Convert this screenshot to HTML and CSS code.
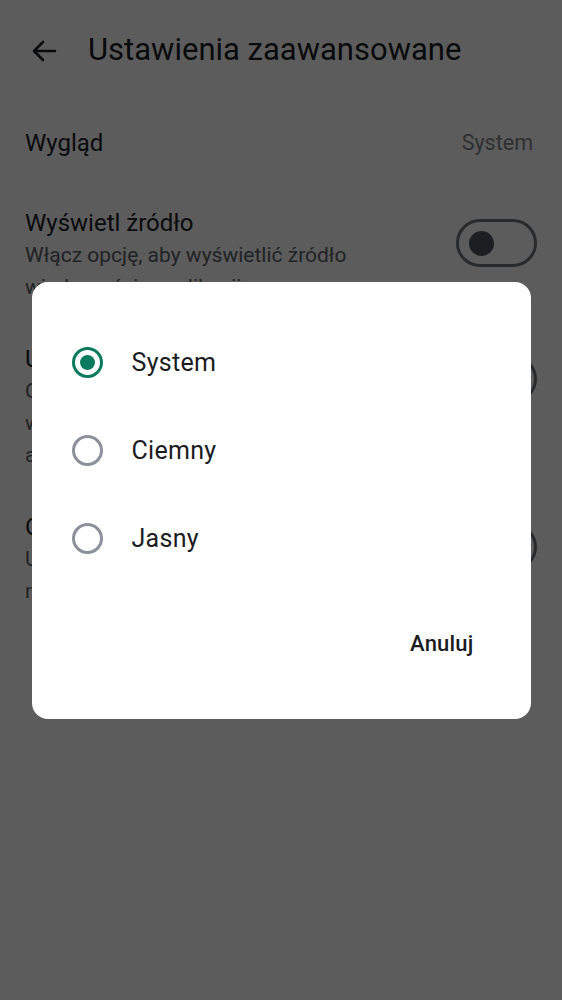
FILE: index.html
```html
<!DOCTYPE html>
<html lang="pl">
<head>
<meta charset="utf-8">
<title>Ustawienia zaawansowane</title>
<link rel="stylesheet" href="styles.css">
</head>
<body>
<div class="screen">
  <header class="topbar">
    <svg class="back" width="26" height="22" viewBox="0 0 26 22" aria-hidden="true">
      <path d="M24 11H3.5 M12 2 L3 11 L12 20" fill="none" stroke="#1b1c1f" stroke-width="2.6" stroke-linecap="round" stroke-linejoin="round"/>
    </svg>
    <h1 class="title">Ustawienia zaawansowane</h1>
  </header>

  <div class="list">
    <div class="row row-simple">
      <span class="row-title">Wygląd</span>
      <span class="row-value">System</span>
    </div>
    <div class="row">
      <div class="row-text">
        <div class="row-title">Wyświetl źródło</div>
        <div class="row-sub">Włącz opcję, aby wyświetlić źródło<br>wiadomości w aplikacji</div>
      </div>
      <span class="switch"><span class="knob"></span></span>
    </div>
    <div class="row">
      <div class="row-text">
        <div class="row-title">Używaj przeglądarki w aplikacji</div>
        <div class="row-sub">Otwieraj linki w przeglądarce<br>wbudowanej zamiast w zewnętrznej<br>aplikacji przeglądarki</div>
      </div>
      <span class="switch"><span class="knob"></span></span>
    </div>
    <div class="row">
      <div class="row-text">
        <div class="row-title">Otwieraj w nowej karcie</div>
        <div class="row-sub">Umożliwia otwieranie linków<br>na nowych kartach</div>
      </div>
      <span class="switch"><span class="knob"></span></span>
    </div>
  </div>
</div>

<div class="overlay">
  <div class="dialog" role="dialog">
    <div class="options">
      <label class="option">
        <span class="radio checked"><span class="dot"></span></span>
        <span class="option-label">System</span>
      </label>
      <label class="option">
        <span class="radio"></span>
        <span class="option-label">Ciemny</span>
      </label>
      <label class="option">
        <span class="radio"></span>
        <span class="option-label">Jasny</span>
      </label>
    </div>
    <div class="actions">
      <button class="btn-text" type="button">Anuluj</button>
    </div>
  </div>
</div>
</body>
</html>
```

FILE: styles.css
```css
* { box-sizing: border-box; }

html, body {
  margin: 0;
  padding: 0;
}

body {
  font-family: Roboto, "Noto Sans", "Liberation Sans", sans-serif;
  background: #ffffff;
  color: #1b1c1f;
}

.screen {
  min-height: 1000px;
  background: #ffffff;
}

.topbar {
  height: 100px;
  display: flex;
  align-items: center;
  padding-left: 31px;
}

.back {
  display: block;
  margin-top: 2px;
}

.title {
  margin: 0 0 0 31px;
  font-size: 31px;
  font-weight: 400;
  line-height: 36px;
  color: #1b1c1f;
}

.list {
  display: flex;
  flex-direction: column;
}

.row {
  display: flex;
  align-items: flex-start;
  justify-content: space-between;
  padding: 20px 25px;
}

.row-simple {
  align-items: center;
  padding: 27px 29px 28px 25px;
}

.row-text {
  display: flex;
  flex-direction: column;
}

.row-title {
  font-size: 24px;
  line-height: 32px;
  color: #1b1c1f;
}

.row-sub {
  font-size: 21px;
  line-height: 32px;
  color: #5b5f66;
}

.row-value {
  font-size: 21.5px;
  line-height: 32px;
  color: #80848b;
}

.switch {
  flex: none;
  width: 81px;
  height: 48px;
  margin-top: 12px;
  border: 3px solid #6f747b;
  border-radius: 24px;
  display: flex;
  align-items: center;
  padding-left: 10px;
}

.knob {
  width: 25px;
  height: 25px;
  border-radius: 50%;
  background: #50555c;
}

.overlay {
  position: fixed;
  inset: 0;
  background: rgba(0, 0, 0, 0.64);
  display: flex;
  align-items: center;
  justify-content: center;
}

.dialog {
  width: 499px;
  height: 437px;
  background: #ffffff;
  border-radius: 16px;
  display: flex;
  flex-direction: column;
  padding-top: 37px;
}

.options {
  display: flex;
  flex-direction: column;
}

.option {
  height: 88px;
  display: flex;
  align-items: center;
  padding-left: 40px;
}

.radio {
  width: 31px;
  height: 31px;
  border-radius: 50%;
  border: 3px solid #8a919a;
  display: flex;
  align-items: center;
  justify-content: center;
}

.radio.checked {
  border-color: #0b7a5e;
}

.dot {
  width: 15px;
  height: 15px;
  border-radius: 50%;
  background: #0b7a5e;
}

.option-label {
  margin-left: 29px;
  font-size: 25px;
  letter-spacing: 0.3px;
  color: #1b1c1f;
}

.actions {
  display: flex;
  justify-content: flex-end;
  padding: 37px 32px 0 0;
}

.btn-text {
  border: none;
  background: transparent;
  font-family: inherit;
  font-size: 22px;
  font-weight: 500;
  color: #1b1c1f;
  height: 48px;
  padding: 0 25px;
  letter-spacing: 0.2px;
}
```
